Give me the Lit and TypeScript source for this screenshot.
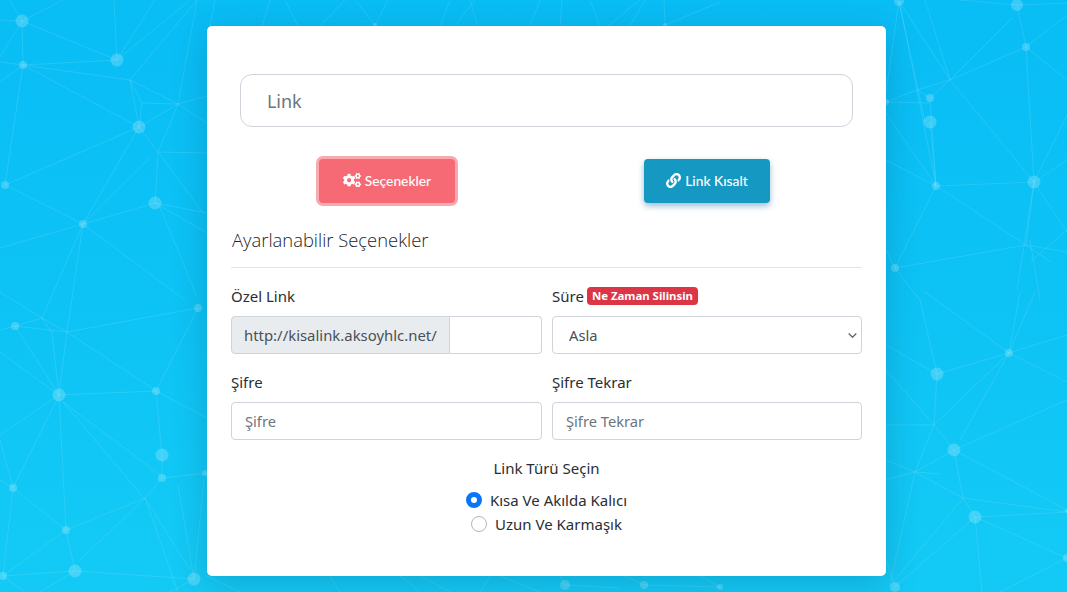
import { LitElement, html, css, svg } from "lit";
import { customElement } from "lit/decorators.js";

const NODES: number[][] = [
  [22,21,6.5],[23,65,4],[117,60,6.5],[139,127,6.5],[5,185,4],[155,203,6.5],[83,224,4],
  [15,326,4],[198,308,4],[59,395,6.5],[156,391,4],[162,455,6.5],[162,478,4],[13,488,4],[66,530,4],[75,571,6.5],[3,576,4],[194,579,6.5],[205,473,3],
  [899,1,5],[1017,5,6],[1026,47,4],[930,98,4],[930,122,6.5],[936,186,4],[1034,182,6.5],[895,268,4],[886,102,3],
  [937,374,6.5],[1009,353,4],[954,450,6.5],[975,517,6.5],[1067,511,2],[1067,558,4],[895,587,5],
  [565,585,5],[644,585,4],[720,587,3],[375,25,2],[665,25,2],
];
const LINES: number[][] = [
  [22,21,117,60],[22,21,63,0],[22,21,0,20],[22,21,0,57],[22,21,23,65],[22,21,10,0],[23,65,117,60],[23,65,130,80],[23,65,0,62],[23,65,0,82],
  [23,65,139,127],[23,65,5,185],[117,60,114,0],[117,60,155,0],[117,60,190,0],[130,80,197,0],[130,80,178,104],[130,80,142,103],[142,103,178,104],[130,80,139,127],
  [142,103,139,127],[178,104,197,0],[178,104,207,96],[178,104,207,123],[178,104,139,127],[139,127,5,185],[139,127,83,224],[139,127,158,152],[158,152,207,153],[158,152,155,203],
  [158,152,178,104],[158,152,203,213],[150,158,83,224],[5,185,83,224],[83,224,155,203],[155,203,207,213],[155,203,207,233],[160,207,197,297],[83,224,0,248],[83,224,50,300],
  [83,224,67,332],[83,224,185,300],
  [0,330,15,326],[15,326,67,332],[15,326,59,395],[50,300,42,318],[0,292,42,318],[67,332,198,308],[67,332,156,391],[67,332,59,395],[52,333,59,395],[42,318,52,333],[15,326,42,318],[42,318,67,332],
  [0,352,59,395],[59,395,156,391],[59,395,0,435],[59,395,13,488],[59,395,66,530],[63,402,160,475],[63,402,143,497],[156,391,207,418],[156,391,162,455],[162,455,162,478],
  [162,478,207,473],[162,478,145,498],[0,480,13,488],[13,488,66,530],[13,488,3,576],[0,440,13,488],[66,530,145,498],[66,530,75,571],[66,530,3,576],[80,560,145,498],
  [145,498,190,570],[145,498,178,592],[178,485,194,579],[194,579,204,480],[3,576,75,571],[75,571,194,579],[3,576,25,592],[194,579,170,592],[75,571,40,592],[156,391,198,308],
  [899,1,950,80],[899,1,917,90],[899,1,886,92],[899,1,925,122],[925,0,950,80],[950,80,1026,47],[950,80,1013,17],[950,80,930,98],[950,80,1034,182],[950,80,917,90],
  [917,90,930,98],[917,90,886,102],[886,102,930,103],[917,90,936,186],[930,122,936,186],[930,98,936,186],[886,113,936,186],[886,160,936,186],[936,186,1034,182],[936,186,895,268],
  [936,186,1026,245],[1017,5,1026,47],[1017,5,1067,3],[960,0,1017,5],[1026,47,1067,15],[1026,47,1034,182],[1026,47,1067,80],[1034,182,1067,115],[1034,182,1067,160],[1034,182,1067,232],
  [1034,182,1017,290],[1026,245,1067,252],[1026,245,1051,262],[895,268,1026,245],[1030,240,1040,300],[895,268,886,250],[895,268,920,300],[1067,230,1030,262],[1034,182,1026,245],
  [925,292,1009,353],[1009,353,1020,292],[1009,353,1035,292],[1009,353,1067,335],[1009,353,1067,382],[1009,353,937,374],[1009,353,934,425],[1009,353,960,440],[937,374,886,345],[937,374,934,425],
  [934,425,954,450],[934,425,886,425],[934,425,915,472],[915,472,954,450],[915,472,886,480],[915,472,940,474],[915,472,963,498],[963,498,1067,512],[963,498,975,517],[954,450,1067,400],
  [954,450,1067,510],[954,450,963,498],[975,517,1067,512],[975,517,1067,558],[975,517,895,587],[975,517,982,592],[1067,558,1000,592],[963,498,895,580],[915,472,890,585],[886,560,895,587],
  [886,370,934,425],[886,460,915,472],[920,300,937,374],
  [210,26,215,0],[262,26,270,0],[298,26,285,0],[320,26,345,0],[375,25,355,0],[375,25,388,0],[440,26,450,0],[455,26,475,0],[478,26,470,0],[530,26,540,0],[560,26,562,0],[600,26,590,0],[608,26,640,0],[665,25,720,2],[665,25,664,0],[630,26,645,0],
  [207,576,240,592],[330,576,340,592],[400,576,420,592],[420,576,450,592],[490,576,480,592],[500,576,540,592],[565,585,620,588],[644,585,720,587],[644,585,625,576],[565,585,560,576],[720,587,700,576],
];

const COGS = "M512.1 191l-8.2 14.3c-3 5.3-9.4 7.5-15.1 5.4-11.8-4.4-22.6-10.7-32.1-18.6-4.6-3.8-5.8-10.5-2.8-15.7l8.2-14.3c-6.9-8-12.3-17.3-15.9-27.4h-16.5c-6 0-11.2-4.3-12.2-10.3-2-12-2.1-24.6 0-37.1 1-6 6.2-10.4 12.2-10.4h16.5c3.6-10.1 9-19.4 15.9-27.4l-8.2-14.3c-3-5.2-1.9-11.9 2.8-15.7 9.5-7.9 20.4-14.2 32.1-18.6 5.7-2.1 12.1.1 15.1 5.4l8.2 14.3c10.5-1.9 21.2-1.9 31.7 0L552 6.3c3-5.3 9.4-7.5 15.1-5.4 11.8 4.4 22.6 10.7 32.1 18.6 4.6 3.8 5.8 10.5 2.8 15.7l-8.2 14.3c6.9 8 12.3 17.3 15.9 27.4h16.5c6 0 11.2 4.3 12.2 10.3 2 12 2.1 24.6 0 37.1-1 6-6.2 10.4-12.2 10.4h-16.5c-3.6 10.1-9 19.4-15.9 27.4l8.2 14.3c3 5.2 1.9 11.9-2.8 15.7-9.5 7.9-20.4 14.2-32.1 18.6-5.7 2.1-12.1-.1-15.1-5.4l-8.2-14.3c-10.4 1.9-21.2 1.9-31.7 0zm-10.5-58.8c38.5 29.6 82.4-14.3 52.8-52.8-38.5-29.7-82.4 14.3-52.8 52.8zM386.3 286.1l33.7 16.8c10.1 5.8 14.5 18.1 10.5 29.1-8.9 24.2-26.4 46.4-42.6 65.8-7.4 8.9-20.2 11.1-30.3 5.3l-29.1-16.8c-16 13.7-34.6 24.6-54.9 31.7v33.6c0 11.6-8.3 21.6-19.7 23.6-24.6 4.2-50.4 4.4-75.9 0-11.5-2-20-11.9-20-23.6V418c-20.3-7.2-38.9-18-54.9-31.7L74 403c-10 5.8-22.9 3.6-30.3-5.3-16.2-19.4-33.3-41.6-42.2-65.7-4-10.9.4-23.2 10.5-29.1l33.3-16.8c-3.9-20.9-3.9-42.4 0-63.4L12 205.8c-10.1-5.8-14.6-18.1-10.5-29 8.9-24.2 26-46.4 42.2-65.8 7.4-8.9 20.2-11.1 30.3-5.3l29.1 16.8c16-13.7 34.6-24.6 54.9-31.7V57.1c0-11.5 8.2-21.5 19.6-23.5 24.6-4.2 50.5-4.4 76-.1 11.5 2 20 11.9 20 23.6v33.6c20.3 7.2 38.9 18 54.9 31.7l29.1-16.8c10-5.8 22.9-3.6 30.3 5.3 16.2 19.4 33.2 41.6 42.1 65.8 4 10.9.1 23.2-10 29.1l-33.7 16.8c3.9 21 3.9 42.5 0 63.5zm-117.6 21.1c59.2-77-28.7-164.9-105.7-105.7-59.2 77 28.7 164.9 105.7 105.7zm243.4 182.7l-8.2 14.3c-3 5.3-9.4 7.5-15.1 5.4-11.8-4.4-22.6-10.7-32.1-18.6-4.6-3.8-5.8-10.5-2.8-15.7l8.2-14.3c-6.9-8-12.3-17.3-15.9-27.4h-16.5c-6 0-11.2-4.3-12.2-10.3-2-12-2.1-24.6 0-37.1 1-6 6.2-10.4 12.2-10.4h16.5c3.6-10.1 9-19.4 15.9-27.4l-8.2-14.3c-3-5.2-1.9-11.9 2.8-15.7 9.5-7.9 20.4-14.2 32.1-18.6 5.7-2.1 12.1.1 15.1 5.4l8.2 14.3c10.5-1.9 21.2-1.9 31.7 0l8.2-14.3c3-5.3 9.4-7.5 15.1-5.4 11.8 4.4 22.6 10.7 32.1 18.6 4.6 3.8 5.8 10.5 2.8 15.7l-8.2 14.3c6.9 8 12.3 17.3 15.9 27.4h16.5c6 0 11.2 4.3 12.2 10.3 2 12 2.1 24.6 0 37.1-1 6-6.2 10.4-12.2 10.4h-16.5c-3.6 10.1-9 19.4-15.9 27.4l8.2 14.3c3 5.2 1.9 11.9-2.8 15.7-9.5 7.9-20.4 14.2-32.1 18.6-5.7 2.1-12.1-.1-15.1-5.4l-8.2-14.3c-10.4 1.9-21.2 1.9-31.7 0zM501.6 431c38.5 29.6 82.4-14.3 52.8-52.8-38.5-29.6-82.4 14.3-52.8 52.8z";
const LINK = "M326.612 185.391c59.747 59.809 58.927 155.698.36 214.59-.11.12-.24.25-.36.37l-67.2 67.2c-59.27 59.27-155.699 59.262-214.96 0-59.27-59.26-59.27-155.7 0-214.96l37.106-37.106c9.84-9.84 26.786-3.3 27.294 10.606.648 17.722 3.826 35.527 9.69 52.721 1.986 5.822.567 12.262-3.783 16.612l-13.087 13.087c-28.026 28.026-28.905 73.66-1.155 101.96 28.024 28.579 74.086 28.749 102.325.51l67.2-67.19c28.191-28.191 28.073-73.757 0-101.83-3.701-3.694-7.429-6.564-10.341-8.569a16.037 16.037 0 0 1-6.947-12.606c-.396-10.567 3.348-21.456 11.698-29.806l21.054-21.055c5.521-5.521 14.182-6.199 20.584-1.731a152.482 152.482 0 0 1 20.522 17.197zM467.547 44.449c-59.261-59.262-155.69-59.27-214.96 0l-67.2 67.2c-.12.12-.25.25-.36.37-58.566 58.892-59.387 154.781.36 214.59a152.454 152.454 0 0 0 20.521 17.196c6.402 4.468 15.064 3.789 20.584-1.731l21.054-21.055c8.35-8.35 12.094-19.239 11.698-29.806a16.037 16.037 0 0 0-6.947-12.606c-2.912-2.005-6.64-4.875-10.341-8.569-28.073-28.073-28.191-73.639 0-101.83l67.2-67.19c28.239-28.239 74.3-28.069 102.325.51 27.75 28.3 26.872 73.934-1.155 101.96l-13.087 13.087c-4.35 4.35-5.769 10.79-3.783 16.612 5.864 17.194 9.042 34.999 9.69 52.721.509 13.906 17.454 20.446 27.294 10.606l37.106-37.106c59.271-59.259 59.271-155.699.001-214.959z";

@customElement("app-root")
export class AppRoot extends LitElement {
  static styles = css`
    :host {
      display: block;
      position: relative;
      height: 592px;
      overflow: hidden;
      box-sizing: border-box;
      padding: 26px 0 0 207px;
      background: linear-gradient(180deg, #09bdf5 0%, #0dc3f5 50%, #14caf5 100%);
      font-family: "Noto Sans", "Open Sans", sans-serif;
      color: #2a2e33;
    }
    * { box-sizing: border-box; }
    .net { position: absolute; inset: 0; width: 1067px; height: 592px; }
    .net line { stroke: rgba(255,255,255,.11); stroke-width: 1; }
    .net circle { fill: rgba(255,255,255,.2); }
    .card {
      position: relative;
      width: 679px;
      height: 550px;
      background: #fff;
      border-radius: 5px;
      box-shadow: 0 8px 34px rgba(0,50,80,.22);
      padding: 48px 24px 0;
    }
    .main {
      display: block;
      width: 613px;
      height: 53px;
      margin-left: 9px;
      border: 1px solid #ced4da;
      border-radius: 12px;
      padding: 0 26px;
      font: 18px "Noto Sans", sans-serif;
      letter-spacing: -.1px;
      outline: none;
    }
    .main::placeholder, .ctl::placeholder { color: #6c757d; opacity: 1; }
    .actions {
      display: grid;
      grid-template-columns: 320px 320px;
      margin: 32px 0 0 -4px;
    }
    .actions > div { display: flex; justify-content: center; }
    .btn {
      display: flex;
      align-items: center;
      justify-content: center;
      gap: 4px;
      height: 44px;
      padding: 0 0 2px;
      border: 0;
      border-radius: 4px;
      color: #fff;
      font: 500 13.8px Lato, sans-serif;
    }
    .btn svg { display: block; fill: #fff; }
    .red {
      width: 136px;
      background: #f56a75;
      box-shadow: 0 0 0 3px #f8a9af;
    }
    .red svg { height: 14.4px; }
    .blue {
      width: 126px;
      background: #1599c3;
      box-shadow: 0 3px 6px rgba(0,90,140,.4);
    }
    .blue svg { height: 15px; }
    h5 {
      margin: 22px 0 0 1px;
      font: 300 18.4px/30px "Open Sans", sans-serif;
      color: #212529;
    }
    hr { border: 0; border-top: 1px solid #e2e4e7; margin: 12px 0 0; width: 631px; }
    .grid {
      display: grid;
      grid-template-columns: 311px 310px;
      column-gap: 10px;
      row-gap: 16px;
      margin-top: 16px;
    }
    .field label {
      display: flex;
      align-items: center;
      gap: 3px;
      height: 24px;
      margin-bottom: 8px;
      font-size: 15px;
    }
    .badge {
      background: #dc3545;
      color: #fff;
      font-weight: 700;
      font-size: 11.4px;
      line-height: 18px;
      height: 18px;
      padding: 0 5px;
      border-radius: 4px;
      white-space: nowrap;
    }
    .ctl {
      display: block;
      width: 100%;
      height: 38px;
      border: 1px solid #ced4da;
      border-radius: 4px;
      padding: 0 13px;
      background: #fff;
      font: 14.7px "Noto Sans", sans-serif;
      color: #495057;
      outline: none;
    }
    .pick { position: relative; }
    select.ctl { padding-left: 16px; appearance: none; -webkit-appearance: none; }
    .chev {
      position: absolute;
      right: 5px;
      top: 17px;
      width: 9px;
      height: 5px;
      fill: none;
      stroke: #666;
      stroke-width: 1.4;
      pointer-events: none;
    }
    .group { display: flex; height: 38px; }
    .prefix {
      display: flex;
      align-items: center;
      width: 219px;
      flex: none;
      padding-left: 12px;
      background: #e9ecef;
      border: 1px solid #ced4da;
      border-radius: 4px 0 0 4px;
      font-size: 14.9px;
      color: #495057;
      white-space: nowrap;
    }
    .group .ctl { border-left: 0; border-radius: 0 4px 4px 0; }
    .type { margin: 16px 0 0; width: 631px; text-align: center; }
    .type .title { font-size: 15px; line-height: 24px; margin-bottom: 8px; }
    .opt {
      display: flex;
      align-items: center;
      justify-content: center;
      gap: 8px;
      height: 24px;
      font-size: 15px;
    }
    .opt input {
      appearance: none;
      -webkit-appearance: none;
      width: 16px;
      height: 16px;
      margin: 0;
      border: 1px solid #b4b4b4;
      border-radius: 50%;
      background: #fff;
    }
    .opt input:checked { border: 5px solid #0a76f6; }
  `;

  render() {
    return html`
      <svg class="net" viewBox="0 0 1067 592" aria-hidden="true">
        ${LINES.map(l => svg`<line x1=${l[0]} y1=${l[1]} x2=${l[2]} y2=${l[3]}></line>`)}
        ${NODES.map(n => svg`<circle cx=${n[0]} cy=${n[1]} r=${n[2]}></circle>`)}
      </svg>
      <div class="card">
        <input class="main" placeholder="Link" />
        <div class="actions">
          <div><button class="btn red"><svg viewBox="0 0 640 512"><path d=${COGS}></path></svg>Seçenekler</button></div>
          <div><button class="btn blue"><svg viewBox="0 0 512 512"><path d=${LINK}></path></svg>Link Kısalt</button></div>
        </div>
        <h5>Ayarlanabilir Seçenekler</h5>
        <hr />
        <div class="grid">
          <div class="field">
            <label>Özel Link</label>
            <div class="group"><span class="prefix">http://kisalink.aksoyhlc.net/</span><input class="ctl" /></div>
          </div>
          <div class="field">
            <label>Süre <span class="badge">Ne Zaman Silinsin</span></label>
            <div class="pick">
              <select class="ctl"><option>Asla</option></select>
              <svg class="chev" viewBox="0 0 9 5"><path d="M.7.6 4.5 4.2 8.3.6"></path></svg>
            </div>
          </div>
          <div class="field">
            <label>Şifre</label>
            <input class="ctl" placeholder="Şifre" />
          </div>
          <div class="field">
            <label>Şifre Tekrar</label>
            <input class="ctl" placeholder="Şifre Tekrar" />
          </div>
        </div>
        <div class="type">
          <div class="title">Link Türü Seçin</div>
          <label class="opt"><input type="radio" name="t" checked />Kısa Ve Akılda Kalıcı</label>
          <label class="opt"><input type="radio" name="t" />Uzun Ve Karmaşık</label>
        </div>
      </div>
    `;
  }
}
